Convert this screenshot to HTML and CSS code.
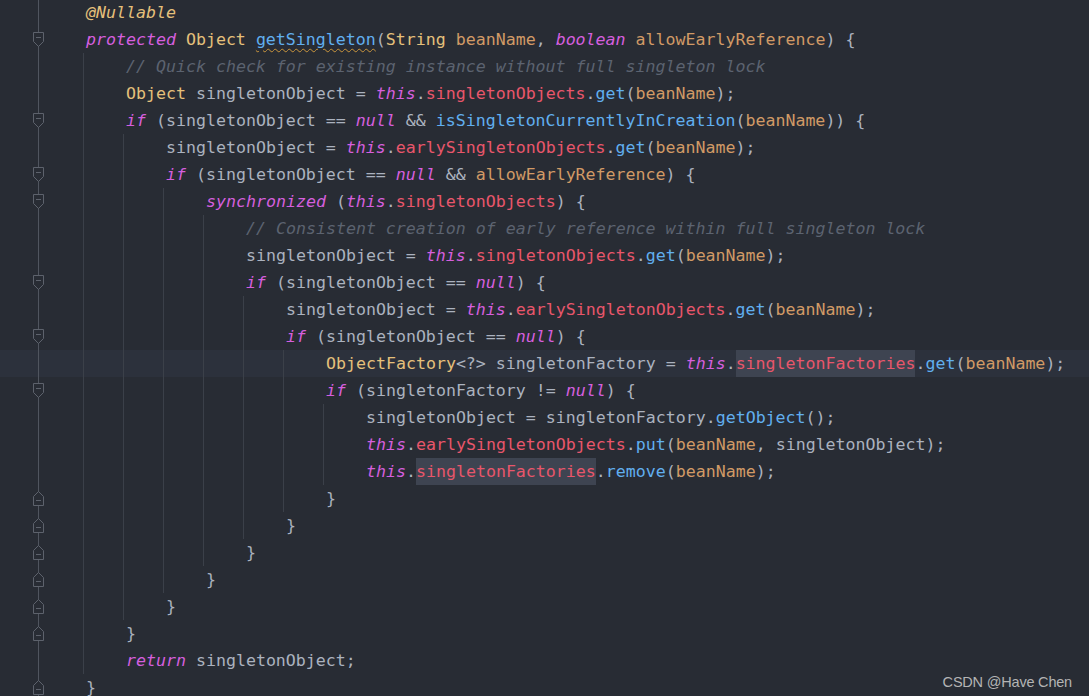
FILE: index.html
```html
<!DOCTYPE html>
<html lang="en">
<head>
    <meta charset="UTF-8">
    <meta name="viewport" content="width=device-width, initial-scale=1.0">
    <link rel="stylesheet" href="styles.css">
    <title>getSingleton</title>
</head>
<body>
    <div class="editor">
        <div class="line"><span class="gut"></span><span class="txt"><span class="an">@Nullable</span></span></div>
        <div class="line"><span class="gut"><svg class="fold" width="11" height="15" viewBox="0 0 11 15"><path d="M0.5 0.5H10.5V9.5L5.5 14.5L0.5 9.5Z"/><path d="M3 5.5H8"/></svg></span><span class="txt"><span class="kw">protected</span> <span class="ty">Object</span> <span class="fn decl">getSingleton</span>(<span class="ty">String</span> <span class="pa">beanName</span>, <span class="kw">boolean</span> <span class="pa">allowEarlyReference</span>) {</span></div>
        <div class="line"><span class="gut"></span><span class="ind"></span><span class="txt"><span class="cm">// Quick check for existing instance without full singleton lock</span></span></div>
        <div class="line"><span class="gut"></span><span class="ind"></span><span class="txt"><span class="ty">Object</span> singletonObject = <span class="kw">this</span>.<span class="fd">singletonObjects</span>.<span class="fn">get</span>(<span class="pa">beanName</span>);</span></div>
        <div class="line"><span class="gut"><svg class="fold" width="11" height="15" viewBox="0 0 11 15"><path d="M0.5 0.5H10.5V9.5L5.5 14.5L0.5 9.5Z"/><path d="M3 5.5H8"/></svg></span><span class="ind"></span><span class="txt"><span class="kw">if</span> (singletonObject == <span class="kw">null</span> &amp;&amp; <span class="fn">isSingletonCurrentlyInCreation</span>(<span class="pa">beanName</span>)) {</span></div>
        <div class="line"><span class="gut"></span><span class="ind"></span><span class="ind"></span><span class="txt">singletonObject = <span class="kw">this</span>.<span class="fd">earlySingletonObjects</span>.<span class="fn">get</span>(<span class="pa">beanName</span>);</span></div>
        <div class="line"><span class="gut"><svg class="fold" width="11" height="15" viewBox="0 0 11 15"><path d="M0.5 0.5H10.5V9.5L5.5 14.5L0.5 9.5Z"/><path d="M3 5.5H8"/></svg></span><span class="ind"></span><span class="ind"></span><span class="txt"><span class="kw">if</span> (singletonObject == <span class="kw">null</span> &amp;&amp; <span class="pa">allowEarlyReference</span>) {</span></div>
        <div class="line"><span class="gut"><svg class="fold" width="11" height="15" viewBox="0 0 11 15"><path d="M0.5 0.5H10.5V9.5L5.5 14.5L0.5 9.5Z"/><path d="M3 5.5H8"/></svg></span><span class="ind"></span><span class="ind"></span><span class="ind"></span><span class="txt"><span class="kw">synchronized</span> (<span class="kw">this</span>.<span class="fd">singletonObjects</span>) {</span></div>
        <div class="line"><span class="gut"></span><span class="ind"></span><span class="ind"></span><span class="ind"></span><span class="ind"></span><span class="txt"><span class="cm">// Consistent creation of early reference within full singleton lock</span></span></div>
        <div class="line"><span class="gut"></span><span class="ind"></span><span class="ind"></span><span class="ind"></span><span class="ind"></span><span class="txt">singletonObject = <span class="kw">this</span>.<span class="fd">singletonObjects</span>.<span class="fn">get</span>(<span class="pa">beanName</span>);</span></div>
        <div class="line"><span class="gut"><svg class="fold" width="11" height="15" viewBox="0 0 11 15"><path d="M0.5 0.5H10.5V9.5L5.5 14.5L0.5 9.5Z"/><path d="M3 5.5H8"/></svg></span><span class="ind"></span><span class="ind"></span><span class="ind"></span><span class="ind"></span><span class="txt"><span class="kw">if</span> (singletonObject == <span class="kw">null</span>) {</span></div>
        <div class="line"><span class="gut"></span><span class="ind"></span><span class="ind"></span><span class="ind"></span><span class="ind"></span><span class="ind"></span><span class="txt">singletonObject = <span class="kw">this</span>.<span class="fd">earlySingletonObjects</span>.<span class="fn">get</span>(<span class="pa">beanName</span>);</span></div>
        <div class="line"><span class="gut"><svg class="fold" width="11" height="15" viewBox="0 0 11 15"><path d="M0.5 0.5H10.5V9.5L5.5 14.5L0.5 9.5Z"/><path d="M3 5.5H8"/></svg></span><span class="ind"></span><span class="ind"></span><span class="ind"></span><span class="ind"></span><span class="ind"></span><span class="txt"><span class="kw">if</span> (singletonObject == <span class="kw">null</span>) {</span></div>
        <div class="line current"><span class="gut"></span><span class="ind"></span><span class="ind"></span><span class="ind"></span><span class="ind"></span><span class="ind"></span><span class="ind"></span><span class="txt"><span class="ty">ObjectFactory</span>&lt;?&gt; singletonFactory = <span class="kw">this</span>.<span class="fd hl">singletonFactories</span>.<span class="fn">get</span>(<span class="pa">beanName</span>);</span></div>
        <div class="line"><span class="gut"><svg class="fold" width="11" height="15" viewBox="0 0 11 15"><path d="M0.5 0.5H10.5V9.5L5.5 14.5L0.5 9.5Z"/><path d="M3 5.5H8"/></svg></span><span class="ind"></span><span class="ind"></span><span class="ind"></span><span class="ind"></span><span class="ind"></span><span class="ind"></span><span class="txt"><span class="kw">if</span> (singletonFactory != <span class="kw">null</span>) {</span></div>
        <div class="line"><span class="gut"></span><span class="ind"></span><span class="ind"></span><span class="ind"></span><span class="ind"></span><span class="ind"></span><span class="ind"></span><span class="ind"></span><span class="txt">singletonObject = singletonFactory.<span class="fn">getObject</span>();</span></div>
        <div class="line"><span class="gut"></span><span class="ind"></span><span class="ind"></span><span class="ind"></span><span class="ind"></span><span class="ind"></span><span class="ind"></span><span class="ind"></span><span class="txt"><span class="kw">this</span>.<span class="fd">earlySingletonObjects</span>.<span class="fn">put</span>(<span class="pa">beanName</span>, singletonObject);</span></div>
        <div class="line"><span class="gut"></span><span class="ind"></span><span class="ind"></span><span class="ind"></span><span class="ind"></span><span class="ind"></span><span class="ind"></span><span class="ind"></span><span class="txt"><span class="kw">this</span>.<span class="fd hl">singletonFactories</span>.<span class="fn">remove</span>(<span class="pa">beanName</span>);</span></div>
        <div class="line"><span class="gut"><svg class="fold" width="11" height="15" viewBox="0 0 11 15"><path d="M0.5 14.5H10.5V5.5L5.5 0.5L0.5 5.5Z"/><path d="M3 9.5H8"/></svg></span><span class="ind"></span><span class="ind"></span><span class="ind"></span><span class="ind"></span><span class="ind"></span><span class="ind"></span><span class="txt">}</span></div>
        <div class="line"><span class="gut"><svg class="fold" width="11" height="15" viewBox="0 0 11 15"><path d="M0.5 14.5H10.5V5.5L5.5 0.5L0.5 5.5Z"/><path d="M3 9.5H8"/></svg></span><span class="ind"></span><span class="ind"></span><span class="ind"></span><span class="ind"></span><span class="ind"></span><span class="txt">}</span></div>
        <div class="line"><span class="gut"><svg class="fold" width="11" height="15" viewBox="0 0 11 15"><path d="M0.5 14.5H10.5V5.5L5.5 0.5L0.5 5.5Z"/><path d="M3 9.5H8"/></svg></span><span class="ind"></span><span class="ind"></span><span class="ind"></span><span class="ind"></span><span class="txt">}</span></div>
        <div class="line"><span class="gut"><svg class="fold" width="11" height="15" viewBox="0 0 11 15"><path d="M0.5 14.5H10.5V5.5L5.5 0.5L0.5 5.5Z"/><path d="M3 9.5H8"/></svg></span><span class="ind"></span><span class="ind"></span><span class="ind"></span><span class="txt">}</span></div>
        <div class="line"><span class="gut"><svg class="fold" width="11" height="15" viewBox="0 0 11 15"><path d="M0.5 14.5H10.5V5.5L5.5 0.5L0.5 5.5Z"/><path d="M3 9.5H8"/></svg></span><span class="ind"></span><span class="ind"></span><span class="txt">}</span></div>
        <div class="line"><span class="gut"><svg class="fold" width="11" height="15" viewBox="0 0 11 15"><path d="M0.5 14.5H10.5V5.5L5.5 0.5L0.5 5.5Z"/><path d="M3 9.5H8"/></svg></span><span class="ind"></span><span class="txt">}</span></div>
        <div class="line"><span class="gut"></span><span class="ind"></span><span class="txt"><span class="kw">return</span> singletonObject;</span></div>
        <div class="line"><span class="gut"><svg class="fold" width="11" height="15" viewBox="0 0 11 15"><path d="M0.5 14.5H10.5V5.5L5.5 0.5L0.5 5.5Z"/><path d="M3 9.5H8"/></svg></span><span class="txt">}</span></div>
    </div>

    <div class="mark">CSDN @Have Chen</div>
</body>
</html>
```

FILE: styles.css
```css
body {
    margin: 0;
    height: 100vh;
    overflow: hidden;
    background-color: #282c34;
    color: #abb2bf;
    font-family: 'DejaVu Sans Mono', 'Liberation Mono', monospace;
    font-size: 16.6px;
}

.editor {
    margin-top: -1px;
}

.line {
    display: flex;
    height: 27px;
    line-height: 27px;
}

.line.current {
    background-color: #2c313c;
}

/* gutter with the fold line and markers */
.gut {
    flex: none;
    width: 83px;
    display: flex;
    align-items: center;
    background: linear-gradient(#50555f, #50555f) 38px 0 / 1px 100% no-repeat;
}

.fold {
    display: block;
    margin-left: 33px;
    fill: #282c34;
    stroke: #5d626c;
    stroke-width: 1;
}

.ind {
    flex: none;
    width: 40px;
    box-sizing: border-box;
    border-left: 1px solid #3b4049;
}

.txt {
    padding-left: 3px;
    white-space: pre;
}

.kw {
    color: #d55fde;
    font-style: italic;
}

.ty {
    color: #e5c07b;
}

.an {
    color: #e5c07b;
    font-style: italic;
}

.pa {
    color: #d19a66;
}

.fd {
    color: #e8566b;
}

.fn {
    color: #61afef;
}

.fn.decl {
    text-decoration: underline wavy #c9953c;
    text-decoration-thickness: 1px;
    text-underline-offset: 3px;
}

.cm {
    color: #5c6370;
    font-style: italic;
}

.hl {
    background-color: #3e4451;
    display: inline-block;
    height: 27px;
}

.mark {
    position: absolute;
    right: 17px;
    bottom: 6px;
    font-family: 'Liberation Sans', Arial, sans-serif;
    font-size: 14.5px;
    letter-spacing: -0.2px;
    color: #b4b4b4;
}
```
